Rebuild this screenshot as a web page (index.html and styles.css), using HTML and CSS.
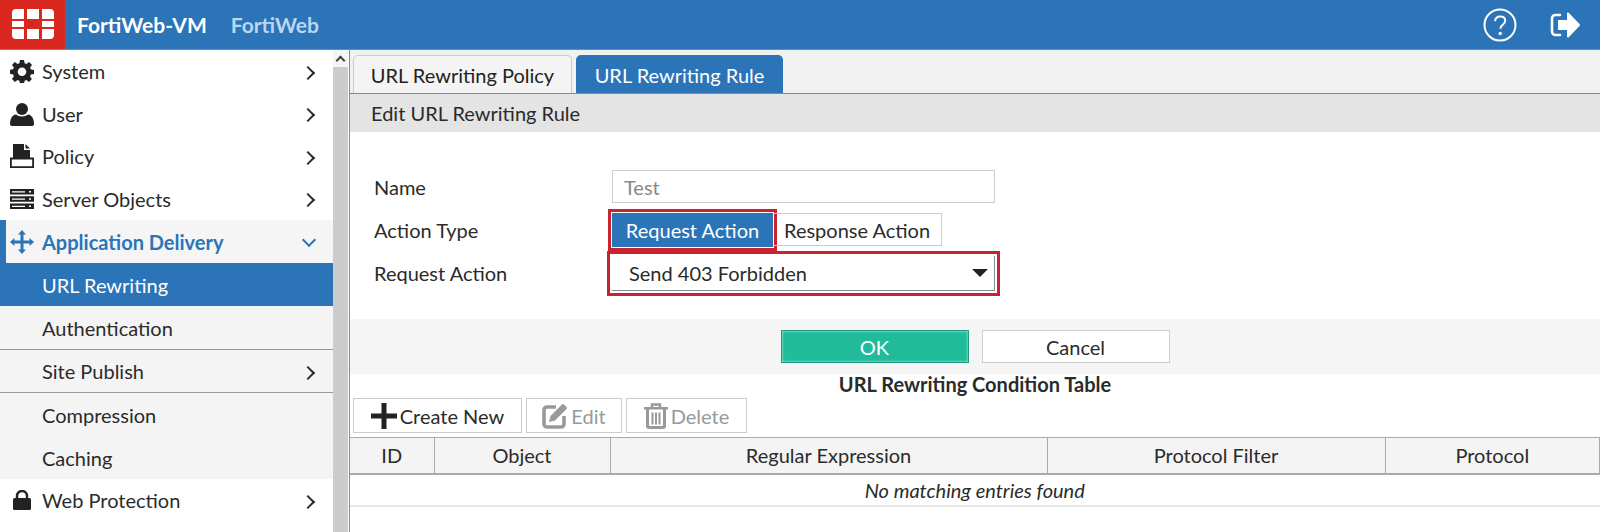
FILE: index.html
```html
<!DOCTYPE html>
<html lang="en">
<head>
<meta charset="utf-8">
<title>FortiWeb-VM</title>
<link rel="stylesheet" href="styles.css">
</head>
<body>
<header class="topbar">
  <div class="logo">
    <svg width="42" height="30" viewBox="0 0 42 30"><path fill="#fff" d="M0 10V4a4 4 0 0 1 4-4h8v10zM15 0h12v10H15zM30 0h8a4 4 0 0 1 4 4v6H30zM0 12h12v6H0zM30 12h12v6H30zM0 20h12v10H4a4 4 0 0 1-4-4zM15 20h12v10H15zM30 20h12v6a4 4 0 0 1-4 4h-8z"/></svg>
  </div>
  <span class="product">FortiWeb-VM</span>
  <span class="host">FortiWeb</span>
  <div class="top-actions">
    <svg class="help" width="34" height="34" viewBox="0 0 34 34"><circle cx="17" cy="17" r="15.5" fill="none" stroke="#fff" stroke-width="2"/><path d="M12 13.2c.3-3 2.300-4.700 5.200-4.700 3 0 5 1.800 5 4.300 0 2-1 3-2.700 4.200-1.500 1.100-2.200 2-2.200 3.800" fill="none" stroke="#fff" stroke-width="2"/><circle cx="17.200" cy="25.500" r="1.700" fill="#fff"/></svg>
    <svg class="logout" width="30" height="26" viewBox="0 0 30 26"><path d="M10 3H5.500A3.500 3.500 0 0 0 2 6.500v13A3.500 3.500 0 0 0 5.500 23H10" fill="none" stroke="#fff" stroke-width="2.600" stroke-linecap="round"/><path fill="#fff" d="M8 8h9V1.500a1 1 0 0 1 1.700-.7L29.500 12a1.500 1.500 0 0 1 0 2L18.700 25.200a1 1 0 0 1-1.700-.7V18H8z"/></svg>
  </div>
</header>
<div class="layout">
  <nav class="sidebar">
    <a class="nav-item">
      <svg class="nav-icon" viewBox="0 0 24 24"><path fill="#222" fill-rule="evenodd" d="M10 1h4l.6 3.200 1.800.8L19.200 3.100 22 5.900 20.100 8.600l.8 1.800 3.100.6v4l-3.200.6-.8 1.800 1.900 2.700-2.800 2.800-2.700-1.900-1.800.8-.6 3.200h-4l-.6-3.200-1.800-.8-2.700 1.900L2 19.900l1.900-2.700-.8-1.800L0 14.800v-4l3.100-.6.8-1.800L2 5.900 4.800 3.100l2.800 1.900 1.800-.8zM12 8.500a4.300 4.300 0 1 0 0 8.600 4.300 4.300 0 0 0 0-8.600z"/></svg>
      <span class="nav-label">System</span><span class="chev"></span>
    </a>
    <a class="nav-item">
      <svg class="nav-icon" viewBox="0 0 24 24"><circle cx="12" cy="7" r="6" fill="#222"/><path fill="#222" d="M2 24a2 2 0 0 1-2-2c0-5 2-9 6-9.500 3 2.500 9 2.500 12 0 4 .5 6 4.500 6 9.500a2 2 0 0 1-2 2z"/></svg>
      <span class="nav-label">User</span><span class="chev"></span>
    </a>
    <a class="nav-item">
      <svg class="nav-icon" viewBox="0 0 24 24"><path fill="#222" d="M3 0h11v6h6v9H3zM15.500 0 20 4.500h-4.500z"/><path fill="none" stroke="#222" stroke-width="1.800" d="M.9 14.500h22.200v8.600H.9z"/></svg>
      <span class="nav-label">Policy</span><span class="chev"></span>
    </a>
    <a class="nav-item">
      <svg class="nav-icon" viewBox="0 0 24 24"><path fill="#222" d="M0 2h24v5.500H0zM0 9.300h24v5.500H0zM0 16.500h24V22H0z"/><path fill="#fff" d="M2 4.200h13v1.200H2zM2 11.500h13v1.200H2zM2 18.700h13v1.200H2zM19 4h2v1.600h-2zM19 11.200h2v1.600h-2zM19 18.400h2V20h-2z"/></svg>
      <span class="nav-label">Server Objects</span><span class="chev"></span>
    </a>
    <a class="nav-item open">
      <svg class="nav-icon" viewBox="0 0 24 24"><path fill="#2b74b8" d="m12 0 4 4.500h-2.500v6h6V8l4.500 4-4.500 4v-2.500h-6v6H16L12 24l-4-4.500h2.500v-6h-6V16L0 12l4.500-4v2.500h6v-6H8z"/></svg>
      <span class="nav-label">Application Delivery</span><span class="chev down"></span>
    </a>
    <div class="subnav">
      <a class="nav-item sub active"><span class="nav-label">URL Rewriting</span></a>
      <a class="nav-item sub"><span class="nav-label">Authentication</span></a>
      <a class="nav-item sub ruled"><span class="nav-label">Site Publish</span><span class="chev"></span></a>
      <a class="nav-item sub"><span class="nav-label">Compression</span></a>
      <a class="nav-item sub"><span class="nav-label">Caching</span></a>
    </div>
    <a class="nav-item">
      <svg class="nav-icon lock" viewBox="0 0 18 20"><path fill="none" stroke="#222" stroke-width="2.400" d="M4 9V6a5 5 0 0 1 10 0v3"/><rect y="8" width="18" height="12" rx="1.500" fill="#222"/></svg>
      <span class="nav-label">Web Protection</span><span class="chev"></span>
    </a>
  </nav>
  <div class="scrollbar"><div class="scroll-up"></div></div>
  <main class="main">
    <div class="tabs">
      <a class="tab">URL Rewriting Policy</a>
      <a class="tab current">URL Rewriting Rule</a>
    </div>
    <h1 class="page-title">Edit URL Rewriting Rule</h1>
    <form class="form">
      <div class="row">
        <span class="field-label">Name</span>
        <div class="input">Test</div>
      </div>
      <div class="row">
        <span class="field-label">Action Type</span>
        <div class="toggle">
          <span class="toggle-btn on">Request Action</span>
          <span class="toggle-btn">Response Action</span>
        </div>
      </div>
      <div class="row">
        <span class="field-label">Request Action</span>
        <div class="select">Send 403 Forbidden<span class="caret"></span></div>
      </div>
    </form>
    <div class="buttons">
      <span class="btn ok">OK</span>
      <span class="btn">Cancel</span>
    </div>
    <h2 class="table-title">URL Rewriting Condition Table</h2>
    <div class="toolbar">
      <span class="tool create">
        <svg class="tool-icon" width="26" height="26" viewBox="0 0 26 26"><path fill="#222" d="M10.500 0h5v10.500H26v5H15.500V26h-5V15.500H0v-5h10.500z"/></svg>Create New
      </span>
      <span class="tool off edit">
        <svg class="tool-icon" width="26" height="26" viewBox="0 0 26 26"><path fill="none" stroke="#999" stroke-width="3.600" d="M14 4H5a3 3 0 0 0-3 3v14a3 3 0 0 0 3 3h14a3 3 0 0 0 3-3v-8"/><path fill="#999" d="M7 19l1.500-6L20 1.500a1.500 1.500 0 0 1 2 0l2.500 2.500a1.500 1.500 0 0 1 0 2L13 17.500z"/></svg>Edit
      </span>
      <span class="tool off delete">
        <svg class="tool-icon" width="24" height="26" viewBox="0 0 24 26"><path fill="none" stroke="#999" stroke-width="2.400" d="M8 4.500V1.500h8v3"/><path fill="#999" d="M0 4h24v2.500H0z"/><path fill="none" stroke="#999" stroke-width="3" d="M3.500 6v17a1.500 1.500 0 0 0 1.500 1.500h14a1.500 1.500 0 0 0 1.500-1.500V6"/><path fill="#999" d="M7.500 9.500h2v12h-2zM11 9.500h2v12h-2zM14.500 9.500h2v12h-2z"/></svg>Delete
      </span>
    </div>
    <table class="grid">
      <colgroup>
        <col class="c-id"><col class="c-object"><col class="c-regex"><col class="c-filter"><col class="c-protocol">
      </colgroup>
      <thead>
        <tr><th>ID</th><th>Object</th><th>Regular Expression</th><th>Protocol Filter</th><th>Protocol</th></tr>
      </thead>
      <tbody>
        <tr><td colspan="5">No matching entries found</td></tr>
      </tbody>
    </table>
  </main>
</div>
</body>
</html>
```
FILE: styles.css
```css
* { box-sizing: border-box; }
html, body { margin: 0; height: 532px; overflow: hidden; }
body { font-family: Lato, "Open Sans", sans-serif; font-size: 20px; color: #2b2b2b; background: #fff; }

.topbar { height: 50px; background: #2b74b8; border-bottom: 1px solid #5b8fc2; display: flex; align-items: center; color: #fff; }
.logo { width: 65px; height: 49px; background: #d9281f; display: flex; align-items: center; justify-content: center; flex: none; }
.logo svg { margin-top: -1px; }
.product { font-weight: 700; font-size: 21px; margin-left: 12px; }
.host { font-weight: 700; font-size: 21px; margin-left: 24px; color: #bcd6ef; }
.top-actions { margin-left: auto; display: flex; align-items: center; gap: 33px; padding-right: 20px; }

.layout { display: flex; height: 482px; }

.sidebar { width: 333px; flex: none; }
.nav-item { height: 42.5px; display: flex; align-items: center; padding: 0 16px 0 10px; color: #2b2b2b; }
.nav-icon { width: 24px; height: 24px; flex: none; }
.nav-icon.lock { width: 18px; height: 20px; margin: 0 3px 0 3px; }
.nav-label { margin-left: 8px; }
.chev { margin-left: auto; width: 10px; height: 10px; border-top: 2px solid #2b2b2b; border-right: 2px solid #2b2b2b; transform: rotate(45deg); margin-right: 4px; margin-top: 3px; }
.chev.down { border-color: #2b74b8; transform: rotate(135deg); margin-top: -4px; margin-right: 3px; }
.nav-item.open { background: #f5f5f5; border-left: 6px solid #2b74b8; padding-left: 4px; height: 43px; color: #2b74b8; font-weight: 700; }
.subnav { background: #f4f4f4; }
.nav-item.sub { padding-left: 42px; height: 43px; }
.nav-item.sub .nav-label { margin-left: 0; }
.nav-item.sub.active { background: #2b74b8; color: #fff; height: 43px; }
.nav-item.sub.ruled { border-top: 1px solid #999; border-bottom: 1px solid #999; height: 44px; }

.scrollbar { width: 15px; flex: none; background: #ccc; }
.scroll-up { height: 17px; background: #f4f4f4; position: relative; }
.scroll-up::after { content: ""; position: absolute; left: 4px; top: 7px; width: 5px; height: 5px; border-top: 2px solid #444; border-left: 2px solid #444; transform: rotate(45deg); }

.main { flex: 1; min-width: 0; margin-left: 1px; border-left: 1px solid #888; display: flex; flex-direction: column; }
.tabs { height: 44px; background: #f1f1f1; border-bottom: 1px solid #888; display: flex; align-items: flex-end; gap: 4px; padding-left: 3px; }
.tab { height: 38px; width: 219px; display: flex; align-items: center; justify-content: center; background: #f4f4f4; border: 1px solid #ccc; border-bottom: 0; border-radius: 5px 5px 0 0; color: #222; }
.tab.current { width: 207px; background: #2b74b8; border-color: #2b74b8; color: #fff; }

.page-title { margin: 0; height: 38px; background: #e4e4e4; font-size: 20px; font-weight: 400; padding-left: 21px; display: flex; align-items: center; }

.form { height: 187px; padding: 38px 0 0 24px; display: flex; flex-direction: column; gap: 10px; }
.row { display: flex; align-items: center; height: 33px; }
.field-label { width: 238px; flex: none; }
.input { width: 383px; height: 33px; border: 1px solid #ccc; color: #888; padding-left: 11px; display: flex; align-items: center; }
.toggle { display: flex; height: 33px; }
.toggle-btn { height: 33px; padding: 0 11px; border: 1px solid #ccc; border-left: 0; display: flex; align-items: center; }
.toggle-btn.on { width: 161px; padding: 0; justify-content: center; background: #2b74b8; color: #fff; border: 0; height: 34px; outline: 3px solid #c8232f; outline-offset: 1px; }
.select { width: 383px; height: 35px; margin-top: 2px; padding-left: 17px; border-right: 1px solid #888; border-bottom: 1px solid #888; display: flex; align-items: center; outline: 3px solid #c8232f; outline-offset: 2px; }
.caret { margin-left: auto; margin-right: 6px; border: 8px solid transparent; border-top: 8px solid #222; border-bottom: 0; }

.buttons { height: 55px; background: #f5f5f5; display: flex; justify-content: center; align-items: center; gap: 13px; flex: none; }
.btn { width: 188px; height: 33px; background: #fff; border: 1px solid #ccc; display: flex; align-items: center; justify-content: center; }
.btn.ok { background: #20bb99; border-color: #1f9e85; color: #fff; box-shadow: inset 0 0 3px #bdece0; }

.table-title { margin: 0; height: 24px; font-size: 20px; font-weight: 700; text-align: center; line-height: 20px; }

.toolbar { display: flex; gap: 4px; height: 39px; padding-left: 3px; }
.tool { height: 35px; display: flex; align-items: center; justify-content: center; border: 1px solid #ccc; gap: 3px; }
.tool.create { width: 169px; }
.tool.edit { width: 96px; }
.tool.delete { width: 121px; }
.tool.off { color: #999; }

.grid { width: 100%; table-layout: fixed; border-collapse: collapse; border-top: 1px solid #aaa; }
.c-id { width: 84px; }
.c-object { width: 176px; }
.c-regex { width: 437px; }
.c-filter { width: 338px; }
.grid th { height: 36px; padding: 0; background: #f4f4f4; font-weight: 400; border-right: 1px solid #aaa; border-bottom: 2px solid #aaa; }
.grid td { height: 32px; padding: 0; text-align: center; font-style: italic; border-bottom: 2px solid #e6e6e6; }
```
